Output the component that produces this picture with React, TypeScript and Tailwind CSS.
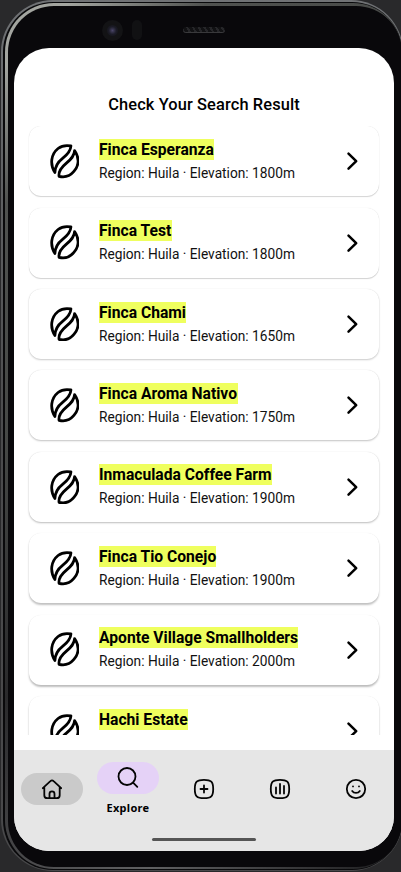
import React from "react";

const farms = [
  { name: "Finca Esperanza", detail: "Region: Huila · Elevation: 1800m", width: "w-[115px]", shadow: "shadow-[0_1px_1px_rgba(0,0,0,0.16),0_0_1px_rgba(0,0,0,0.14)]" },
  { name: "Finca Test", detail: "Region: Huila · Elevation: 1800m", width: "w-[73px]", shadow: "shadow-[0_1px_1px_rgba(0,0,0,0.17),0_0_1px_rgba(0,0,0,0.14)]" },
  { name: "Finca Chami", detail: "Region: Huila · Elevation: 1650m", width: "w-[87px]", shadow: "shadow-[0_1px_2px_rgba(0,0,0,0.2),0_0_1px_rgba(0,0,0,0.13)]" },
  { name: "Finca Aroma Nativo", detail: "Region: Huila · Elevation: 1750m", width: "w-[139px]", shadow: "shadow-[0_1px_2px_rgba(0,0,0,0.23),0_0_1px_rgba(0,0,0,0.12)]" },
  { name: "Inmaculada Coffee Farm", detail: "Region: Huila · Elevation: 1900m", width: "w-[173px]", shadow: "shadow-[0_1px_2px_rgba(0,0,0,0.26),0_0_1px_rgba(0,0,0,0.11)]" },
  { name: "Finca Tio Conejo", detail: "Region: Huila · Elevation: 1900m", width: "w-[117px]", shadow: "shadow-[0_2px_2px_rgba(0,0,0,0.24),0_0_1px_rgba(0,0,0,0.1)]" },
  { name: "Aponte Village Smallholders", detail: "Region: Huila · Elevation: 2000m", width: "w-[199px]", shadow: "shadow-[0_2px_2px_rgba(0,0,0,0.26),0_0_1px_rgba(0,0,0,0.09)]" },
  { name: "Hachi Estate", detail: "", width: "w-[89px]", shadow: "shadow-[0_2px_2px_rgba(0,0,0,0.26),0_0_1px_rgba(0,0,0,0.09)]" },
];

function Bean() {
  return (
    <svg className="ml-[0.5px]" width="29.5" height="34.5" viewBox="0 0 30 35" fill="none" stroke="#000" strokeWidth="2.8" strokeLinejoin="round" strokeLinecap="round">
      <path d="M5 29C-.2 21 .7 10.5 8.2 4.5C12 1.5 16.5 1 21.3 1.9C21 7.6 17.5 11 12.5 14.8C7.5 18.6 5.2 22.8 5 29Z" />
      <path d="M9.2 32.9C8.4 27.4 11.6 23.7 16.4 19.7C21.6 15.3 24.8 12 25 6.6C29.6 13.5 29.8 21.3 24.3 27.9C20.2 32.8 14.5 34.2 9.2 32.9Z" />
    </svg>
  );
}

function FarmCard({ farm }: { farm: (typeof farms)[number] }) {
  return (
    <div className={`mb-[11.4px] flex h-[70px] shrink-0 items-center rounded-[12px] bg-white pl-5 pr-5 ${farm.shadow}`}>
      <Bean />
      <div className="ml-5 flex-1 self-start whitespace-nowrap pt-[12.5px]">
        <div className={`h-[21px] bg-[#efff5e] text-[15.65px] font-bold leading-[22px] ${farm.width}`}>{farm.name}</div>
        {farm.detail && <div className="mt-[3px] text-[13.72px] leading-5 text-[#111]">{farm.detail}</div>}
      </div>
      <svg width="13" height="20" viewBox="0 0 13 20" fill="none" stroke="#000" strokeWidth="2.5" strokeLinecap="round" strokeLinejoin="round">
        <path d="M2.5 2.6 10.2 10.1l-7.7 7.5" />
      </svg>
    </div>
  );
}

const iconProps = { width: 24, height: 24, viewBox: "0 0 24 24", fill: "none", stroke: "#050505", strokeWidth: 1.8, strokeLinecap: "round", strokeLinejoin: "round" } as const;
const squircle = "M12 2.8C19.2 2.8 21.2 4.8 21.2 12S19.2 21.2 12 21.2 2.8 19.2 2.8 12 4.8 2.8 12 2.8Z";

export default function App() {
  return (
    <div className="relative h-[872px] w-[401px] overflow-hidden bg-[#29292b] font-['Roboto',sans-serif] text-black">
      <div className="ml-px h-[871px] w-[402px] rounded-[52px] bg-linear-to-b from-[#707275] via-[#4b4b4d] to-[#48484a] pb-px pl-[2px] pr-px pt-[2px]">
        <div className="h-full rounded-[50px] bg-[#09090b] pb-px pl-[2px] pt-px">
          <div className="h-full rounded-[49px] bg-[linear-gradient(135deg,#a3a5a0_0,#a3a5a0_5%,#505250_16%,#464846_35%,#2a2a2c_55%,#606062_80%,#1b1b1d_100%)] pb-[2px] pl-[3px] pt-[3px]">
            <div className="flex h-full flex-col rounded-[46px] bg-[#09080b] pl-[6px] pt-[42px]">
              <div className="flex h-[803px] w-[380px] flex-col overflow-hidden rounded-[35px] bg-white">
                <h1 className="mt-[45px] h-[33px] text-center text-[16.4px] font-medium leading-6 tracking-[0.12px]">Check Your Search Result</h1>
                <main className="flex h-[609px] flex-col overflow-hidden px-[15px] pt-[0.3px]">
                  {farms.map((farm) => <FarmCard key={farm.name} farm={farm} />)}
                </main>
                <nav className="mt-[15px] h-[101px] bg-[#e6e6e6]">
                  <div className="grid h-[78px] grid-cols-5">
                    <div className="flex justify-center pt-[23px]">
                      <div className="flex h-8 w-[62px] items-center justify-center rounded-full bg-[#cacaca]">
                        <svg {...iconProps}><path d="m2.8 11.2 7.6-7a2.3 2.3 0 0 1 3.2 0l7.6 7M4.3 10v8.2c0 2 1 3 3 3h9.4c2 0 3-1 3-3V10M9.5 21v-4.2a2.5 2.5 0 0 1 5 0V21" /></svg>
                      </div>
                    </div>
                    <div className="flex flex-col items-center pt-3">
                      <div className="flex h-8 w-[62px] items-center justify-center rounded-full bg-[#e5d2f7]">
                        <svg {...iconProps}><circle cx="11" cy="10.5" r="8.5" /><path d="m17.3 16.8 4 4" /></svg>
                      </div>
                      <span className="mt-[6px] font-['Noto_Sans',sans-serif] text-[11px] font-bold leading-4 tracking-[0.3px]">Explore</span>
                    </div>
                    <div className="flex justify-center pt-[27px]"><svg {...iconProps}><path d={squircle} /><path d="M12 8.5v7M8.5 12h7" /></svg></div>
                    <div className="flex justify-center pt-[27px]"><svg {...iconProps}><path d={squircle} /><path d="M8 10.5v6M12 7v9.5M16 9v7.5" /></svg></div>
                    <div className="flex justify-center pt-[27px]"><svg {...iconProps}><circle cx="12" cy="12" r="9.2" /><path d="M8.2 14c1.6 2.6 6 2.6 7.6 0M9 9.3v.1M15 9.3v.1" /></svg></div>
                  </div>
                  <div className="mx-auto mt-[10px] h-[3px] w-[104px] rounded-full bg-[#555]" />
                </nav>
              </div>
            </div>
          </div>
        </div>
      </div>
      <div className="absolute left-[102px] top-5 flex size-[21px] items-center justify-center rounded-full bg-[#131315]">
        <div className="size-[11px] rounded-full bg-radial from-[#4a4568] via-[#1b1b26] to-[#111114]" />
      </div>
      <div className="absolute left-[132px] top-5 h-[20px] w-[10px] rounded-full bg-[#111113]" />
      <div className="absolute left-[183px] top-[27px] h-[6px] w-[42px] rounded-full border-b border-[#39393b] bg-[repeating-linear-gradient(60deg,#262629_0,#262629_2px,#111113_2px,#111113_5px)]" />
    </div>
  );
}
